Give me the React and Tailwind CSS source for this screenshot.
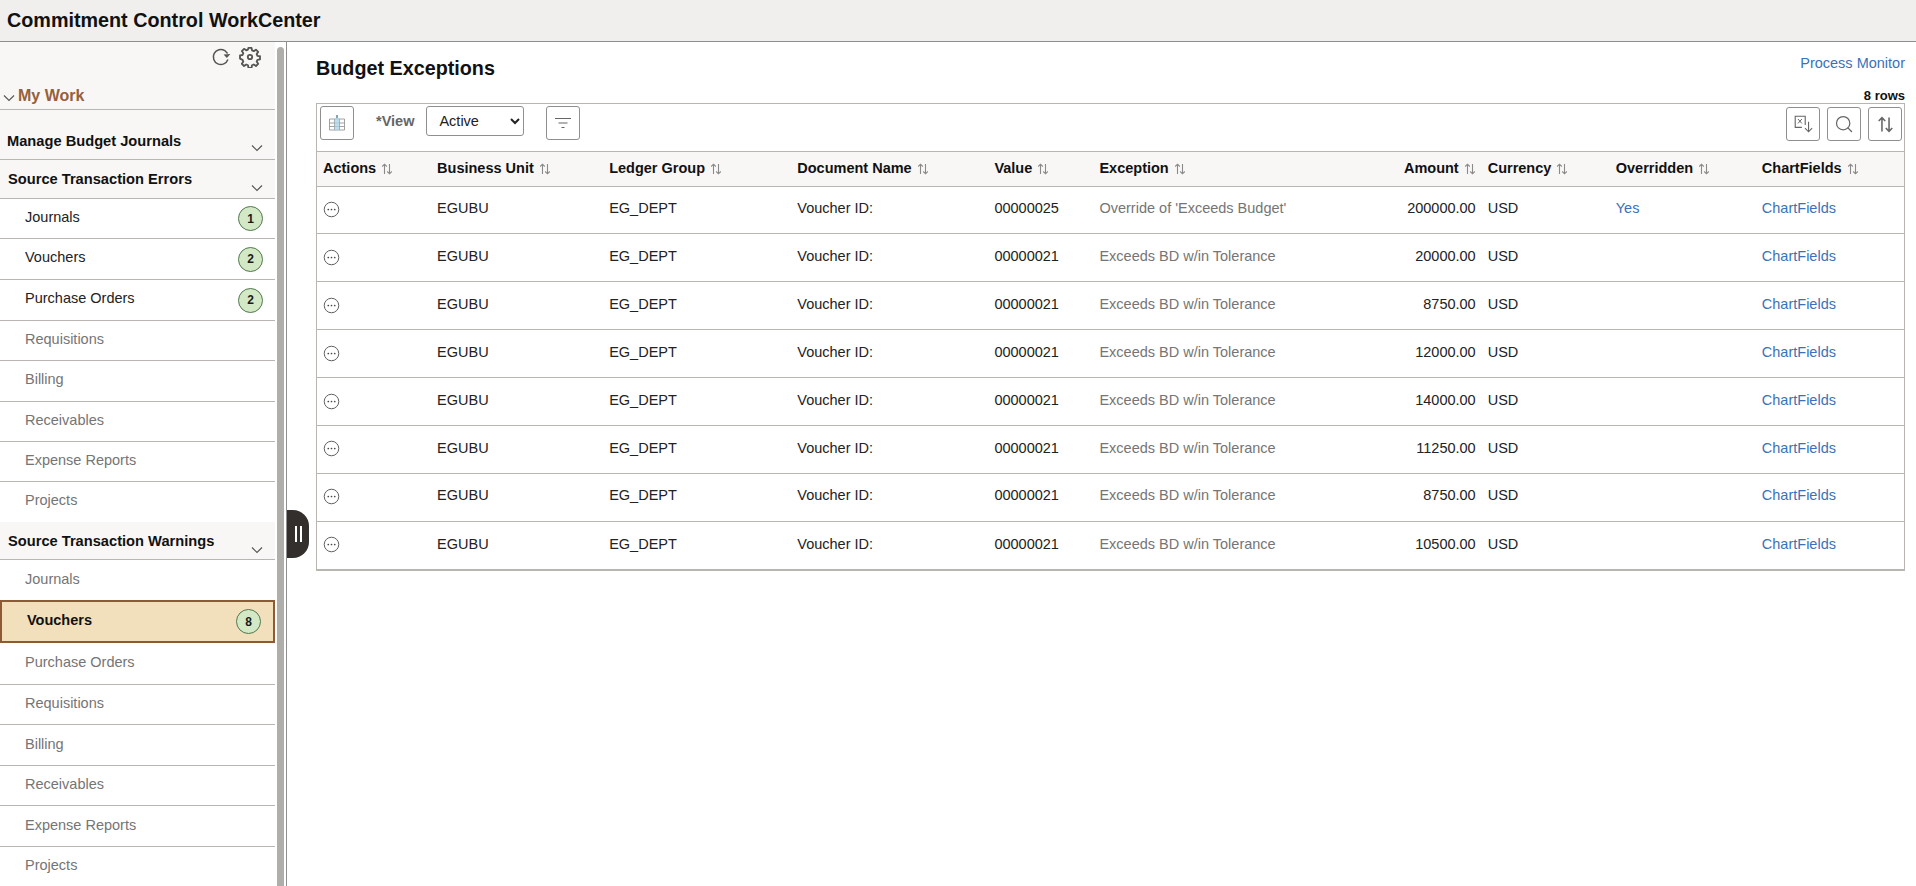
import React from "react";
import { Search } from "lucide-react";

const errorItems = [
  { label: "Journals", count: 1, h: "h-[40px]" },
  { label: "Vouchers", count: 2, h: "h-[41px]" },
  { label: "Purchase Orders", count: 2, h: "h-[41px]" },
  { label: "Requisitions", h: "h-[40px]" },
  { label: "Billing", h: "h-[41px]" },
  { label: "Receivables", h: "h-[40px]" },
  { label: "Expense Reports", h: "h-[40px]" },
  { label: "Projects", h: "h-[40px]", last: true },
];

const warningItems = [
  { label: "Journals", h: "h-[40px]", last: true, pb: "pb-[1px]" },
  { label: "Vouchers", count: 8, selected: true },
  { label: "Purchase Orders", h: "h-[42px]", pb: "pb-[1px]" },
  { label: "Requisitions", h: "h-[40px]" },
  { label: "Billing", h: "h-[41px]", pb: "pb-[1px]" },
  { label: "Receivables", h: "h-[40px]" },
  { label: "Expense Reports", h: "h-[41px]", pb: "pb-[1px]" },
  { label: "Projects", h: "h-[40px]", last: true },
];

const columns = [
  { label: "Actions", w: "w-[114px]" },
  { label: "Business Unit", w: "w-[172px]" },
  { label: "Ledger Group", w: "w-[188px]" },
  { label: "Document Name", w: "w-[197px]" },
  { label: "Value", w: "w-[105px]" },
  { label: "Exception", w: "w-[260px]" },
  { label: "Amount", w: "w-[128px]", right: true },
  { label: "Currency", w: "w-[128px]" },
  { label: "Overridden", w: "w-[146px]" },
  { label: "ChartFields", w: "w-[148px]" },
];

const rows = [
  { value: "00000025", exception: "Override of 'Exceeds Budget'", amount: "200000.00", overridden: "Yes" },
  { value: "00000021", exception: "Exceeds BD w/in Tolerance", amount: "20000.00" },
  { value: "00000021", exception: "Exceeds BD w/in Tolerance", amount: "8750.00" },
  { value: "00000021", exception: "Exceeds BD w/in Tolerance", amount: "12000.00" },
  { value: "00000021", exception: "Exceeds BD w/in Tolerance", amount: "14000.00" },
  { value: "00000021", exception: "Exceeds BD w/in Tolerance", amount: "11250.00" },
  { value: "00000021", exception: "Exceeds BD w/in Tolerance", amount: "8750.00" },
  { value: "00000021", exception: "Exceeds BD w/in Tolerance", amount: "10500.00" },
];

function Chevron({ className }) {
  return (
    <svg viewBox="0 0 12 8" className={className} fill="none" stroke="#555" strokeWidth="1.1">
      <path d="M1 1.5 6 6.5 11 1.5" />
    </svg>
  );
}

function SortIcon({ className = "w-[12px] h-[12px]", color = "#8a8a8a" }) {
  return (
    <svg viewBox="0 0 12 12" className={className} fill="none" stroke={color} strokeWidth="1.1">
      <path d="M3.5 11V1.2M1.2 3.5 3.5 1.2 5.8 3.5" />
      <path d="M8.5 1v9.8M6.2 8.5 8.5 10.8 10.8 8.5" />
    </svg>
  );
}

function Badge({ count }) {
  return (
    <span className="w-[25px] h-[25px] rounded-full bg-[#d3e9c5] border border-[#50794f] flex items-center justify-center text-[12px] font-bold text-[#1a1a1a]">
      {count}
    </span>
  );
}

function SectionHeader({ label, h, chevronClass, left = "pl-[7px]", pb = "pb-[9px]" }) {
  return (
    <div className={`${h} ${left} relative flex items-end bg-[#f8f7f6] border-b border-[#b9b6b2]`}>
      <span className={`font-bold text-[14.67px] text-[#111] leading-[18px] ${pb}`}>{label}</span>
      <Chevron className={`absolute right-[12px] w-[12px] h-[8px] ${chevronClass}`} />
    </div>
  );
}

function NavItem({ item }) {
  if (item.selected) {
    return (
      <div className="h-[43px] pl-[25px] pr-[12px] flex items-center justify-between bg-[#f2dfbc] border-[2px] border-[#8d5a35]">
        <span className="font-bold text-[14.5px] text-[#111] pb-[2px]">{item.label}</span>
        <Badge count={item.count} />
      </div>
    );
  }
  return (
    <div
      className={`${item.h} pl-[25px] pr-[12px] flex items-center justify-between ${item.last ? "" : "border-b border-[#b9b6b2]"}`}
    >
      <span className={`text-[14.5px] ${item.pb || "pb-[2px]"} ${item.count ? "text-[#222]" : "text-[#757575]"}`}>{item.label}</span>
      {item.count && <Badge count={item.count} />}
    </div>
  );
}

function Sidebar() {
  return (
    <aside className="w-[287px] shrink-0 flex border-r border-[#8f8f8f] h-full overflow-hidden">
      <nav className="w-[275px] shrink-0">
        <div className="bg-[#f8f7f6] h-[68px] border-b border-[#b9b6b2] relative">
          <div className="flex justify-end items-center gap-[8px] pr-[14px] pt-[4px]">
            <svg viewBox="0 0 20 20" className="w-[20px] h-[20px]" fill="none" stroke="#555" strokeWidth="1.5">
              <path d="M16.9 12.5A7.5 7.5 0 1 1 13.8 3.6L16.6 6.6" />
              <path d="M19.4 7 15.8 11 12.6 7.6" fill="#555" stroke="none" />
            </svg>
            <svg viewBox="0 0 24 24" className="w-[22px] h-[22px]" fill="none" stroke="#555" strokeWidth="2" strokeLinejoin="round">
              <path d="M10.3 2h3.4l.5 2.8 1.9.8 2.4-1.6 2.4 2.4-1.6 2.4.8 1.9 2.8.5v3.4l-2.8.5-.8 1.9 1.6 2.4-2.4 2.4-2.4-1.6-1.9.8-.5 2.8h-3.4l-.5-2.8-1.9-.8-2.4 1.6-2.4-2.4 1.6-2.4-.8-1.9L1.1 13.7v-3.4l2.8-.5.8-1.9L3.1 5.5l2.4-2.4 2.4 1.6 1.9-.8z" />
              <circle cx="12" cy="12" r="2.4" />
            </svg>
          </div>
          <div className="absolute left-[3px] bottom-[3px] flex items-center gap-[3px]">
            <Chevron className="w-[12px] h-[8px] mt-[4px]" />
            <span className="font-bold text-[16px] leading-[20px] text-[#96603a]">My Work</span>
          </div>
        </div>
        <SectionHeader label="Manage Budget Journals" h="h-[50px]" chevronClass="top-[34px]" />
        <SectionHeader label="Source Transaction Errors" h="h-[39px]" chevronClass="top-[24px]" left="pl-[8px]" pb="pb-[10px]" />
        {errorItems.map((item, i) => (
          <NavItem key={i} item={item} />
        ))}
        <SectionHeader label="Source Transaction Warnings" h="h-[38px]" chevronClass="top-[24px]" left="pl-[8px]" />
        {warningItems.map((item, i) => (
          <NavItem key={i} item={item} />
        ))}
      </nav>
      <div className="w-[7px] shrink-0 ml-[2px] mt-[5px] bg-[#b0aeab] rounded-t-[4px]" />
    </aside>
  );
}

function ToolButton({ children, className = "" }) {
  return (
    <button className={`w-[34px] h-[34px] bg-white border border-[#8f8f8f] rounded-[3px] flex items-center justify-center ${className}`}>
      {children}
    </button>
  );
}

function ActionIcon() {
  return (
    <svg viewBox="0 0 18 18" className="w-[17px] h-[17px]" fill="none">
      <circle cx="9" cy="9" r="7.7" stroke="#555" strokeWidth="1" />
      <circle cx="5.6" cy="9" r="0.9" fill="#444" />
      <circle cx="9" cy="9" r="0.9" fill="#444" />
      <circle cx="12.4" cy="9" r="0.9" fill="#444" />
    </svg>
  );
}

function Toolbar() {
  return (
    <div className="h-[48px] flex items-start justify-between pt-[2px] pl-[3px] pr-[2px] border-b border-[#b9b6b2]">
      <div className="flex items-start">
        <ToolButton>
          <svg viewBox="0 0 18 18" className="w-[18px] h-[18px]" fill="none">
            <path d="M1.5 5h15v11h-15zM1.5 9h15M1.5 12.5h15M6.5 5v11M11.5 5v11" stroke="#8a8a8a" strokeWidth="0.8" />
            <rect x="6.5" y="4" width="5" height="12" fill="#a9d3e8" fillOpacity="0.75" />
            <path d="M9 1v3" stroke="#4a7f9c" strokeWidth="1.4" />
          </svg>
        </ToolButton>
        <span className="ml-[22px] mt-[5px] text-[14.5px] font-bold text-[#666]">*View</span>
        <select
          defaultValue="Active"
          className="ml-[12px] w-[98px] h-[30px] pl-[8px] text-[14.5px] text-[#222] bg-white border border-[#8f8f8f] rounded-[3px]"
        >
          <option>Active</option>
        </select>
        <ToolButton className="ml-[22px]">
          <svg viewBox="0 0 18 18" className="w-[18px] h-[18px]" fill="none" stroke="#666" strokeWidth="1.1">
            <path d="M1 4.5h16M4.5 9h9M7.5 13.5h3" />
          </svg>
        </ToolButton>
      </div>
      <div className="flex gap-[7px] pt-[1px]">
        <ToolButton>
          <svg viewBox="0 0 18 18" className="w-[20px] h-[20px]" fill="none" stroke="#666" strokeWidth="1">
            <path d="M11 10V2H2v10h6" />
            <path d="M4.5 4.5 8 8.5M8 4.5 4.5 8.5" strokeWidth="0.9" />
            <path d="M14 7v9M10.8 12.8 14 16l3.2-3.2" />
          </svg>
        </ToolButton>
        <ToolButton>
          <Search size={20} color="#666" strokeWidth={1.5} />
        </ToolButton>
        <ToolButton>
          <SortIcon className="w-[17px] h-[17px]" color="#666" />
        </ToolButton>
      </div>
    </div>
  );
}

function ExceptionsTable() {
  return (
    <table className="w-full table-fixed border-collapse text-[14.5px]">
      <thead>
        <tr className="h-[34px] bg-[#f8f7f6] border-b border-[#b9b6b2]">
          {columns.map((col) => (
            <th key={col.label} className={`${col.w} px-[6px] font-bold text-[#111] ${col.right ? "text-right" : "text-left"}`}>
              <span className={`flex items-center gap-[5px] ${col.right ? "justify-end" : ""}`}>
                {col.label}
                <SortIcon />
              </span>
            </th>
          ))}
        </tr>
      </thead>
      <tbody>
        {rows.map((row, i) => (
          <tr key={i} className={`h-[47.9px] text-[#222] ${i < rows.length - 1 ? "border-b border-[#b9b6b2]" : ""}`}>
            <td className="px-[6px] pb-[1px]">
              <ActionIcon />
            </td>
            <td className="px-[6px] pb-[2px]">EGUBU</td>
            <td className="px-[6px] pb-[2px]">EG_DEPT</td>
            <td className="px-[6px] pb-[2px]">Voucher ID:</td>
            <td className="px-[6px] pb-[2px]">{row.value}</td>
            <td className="px-[6px] pb-[2px] text-[#757575]">{row.exception}</td>
            <td className="px-[6px] pb-[2px] text-right">{row.amount}</td>
            <td className="px-[6px] pb-[2px]">USD</td>
            <td className="px-[6px] pb-[2px] text-[#3a72b8]">{row.overridden}</td>
            <td className="px-[6px] pb-[2px] text-[#3a72b8]">ChartFields</td>
          </tr>
        ))}
      </tbody>
    </table>
  );
}

export default function App() {
  return (
    <div className="h-screen overflow-hidden flex flex-col bg-white font-['Liberation_Sans',Arial,sans-serif]">
      <header className="h-[42px] shrink-0 bg-[#f0efee] border-b border-[#8f8f8f] flex items-center pl-[7px]">
        <h1 className="text-[19.75px] font-bold text-[#111]">Commitment Control WorkCenter</h1>
      </header>
      <div className="flex-1 flex min-h-0 relative">
        <Sidebar />
        <button className="absolute left-[287px] top-[468px] w-[22px] h-[48px] bg-[#332f2c] rounded-r-[16px] flex items-center justify-center gap-[3px]">
          <span className="w-[2px] h-[16px] bg-white" />
          <span className="w-[2px] h-[16px] bg-white" />
        </button>
        <main className="flex-1 min-w-0 pl-[29px] pr-[11px]">
          <div className="h-[47px] flex justify-between">
            <h2 className="text-[19.75px] font-bold text-[#111] pt-[12px] leading-[28px]">Budget Exceptions</h2>
            <a className="text-[14.5px] text-[#3a72b8] pt-[11px] leading-[20px]">Process Monitor</a>
          </div>
          <div className="h-[14px] text-right text-[13px] font-bold text-[#111] leading-[14px]">8 rows</div>
          <div className="border-[1px] border-b-[2px] border-[#b9b6b2]">
            <Toolbar />
            <ExceptionsTable />
          </div>
        </main>
      </div>
    </div>
  );
}
